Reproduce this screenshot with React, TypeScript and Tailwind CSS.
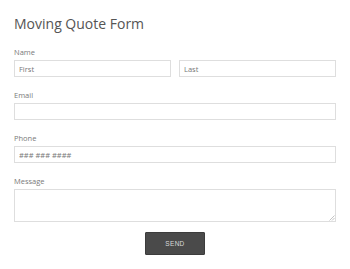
export default function App() {
  const field =
    "block w-full h-[17px] border border-[#dedede] bg-white px-[4px] text-[7.5px] text-[#555] placeholder:text-[#777] outline-none rounded-none";
  const label = "block text-[7.5px] leading-[10px] text-[#7a7a7a] mb-[3px]";

  return (
    <div className="w-[350px] h-[269px] bg-white font-['Open_Sans',sans-serif]">
      <form className="flex flex-col pl-[14px] pr-[14px] pt-[14px]" onSubmit={(e) => e.preventDefault()}>
        <h1 className="text-[14px] leading-[20px] text-[#555] font-normal mb-[13px]">Moving Quote Form</h1>

        {/* Name */}
        <div className="mb-[13px]">
          <label className={label}>Name</label>
          <div className="flex gap-[8px]">
            <input className={field} placeholder="First" />
            <input className={field} placeholder="Last" />
          </div>
        </div>

        {/* Email */}
        <div className="mb-[13px]">
          <label className={label}>Email</label>
          <input className={field} />
        </div>

        {/* Phone */}
        <div className="mb-[13px]">
          <label className={label}>Phone</label>
          <input className={field} placeholder="### ### ####" />
        </div>

        {/* Message */}
        <div className="mb-[10px]">
          <label className={label}>Message</label>
          <div className="relative">
            <textarea className="block w-full h-[33px] resize-none border border-[#dedede] bg-white px-[4px] text-[7.5px] outline-none rounded-none" />
            <svg className="absolute right-[1px] bottom-[1px]" width="6" height="6" viewBox="0 0 6 6">
              <path d="M5.5 0.5 L0.5 5.5 M5.5 3 L3 5.5" stroke="#b5b5b5" strokeWidth="0.8" />
            </svg>
          </div>
        </div>

        <div className="flex justify-center">
          <button
            type="submit"
            className="w-[60px] h-[23px] bg-[#4a4a4a] border border-[#3c3c3c] rounded-[1px] text-[6.5px] tracking-[0.3px] text-[#d9d9d9] font-['Liberation_Sans',sans-serif]"
          >
            SEND
          </button>
        </div>
      </form>
    </div>
  );
}
